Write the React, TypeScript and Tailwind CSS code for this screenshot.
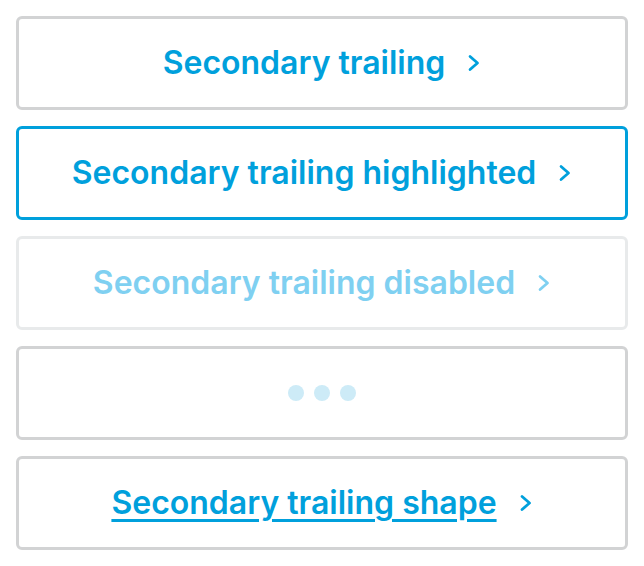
import React from "react";

function Chevron({ className }: { className?: string }) {
  return (
    <svg viewBox="0 0 16 20" className={className} fill="none" stroke="currentColor" strokeWidth={3.2} strokeLinecap="round" strokeLinejoin="round">
      <path d="M3.5 2.5 L12 10 L3.5 17.5" />
    </svg>
  );
}

const base =
  "flex h-[94px] w-full items-center justify-center gap-[22px] rounded-md border-[3px] bg-white text-[32px] font-semibold";

export default function App() {
  return (
    <div className="flex min-h-screen flex-col gap-4 bg-white px-4 py-4 font-['Inter','Liberation_Sans',sans-serif]">
      <button className={`${base} border-[#d2d3d4] text-[#00a0dc]`}>
        <span>Secondary trailing</span>
        <Chevron className="h-[20px] w-[14px]" />
      </button>
      <button className={`${base} border-[#00a0dc] text-[#00a0dc]`}>
        <span>Secondary trailing highlighted</span>
        <Chevron className="h-[20px] w-[14px]" />
      </button>
      <button className={`${base} border-[#e8eaeb] text-[#7fd0f1]`} disabled>
        <span>Secondary trailing disabled</span>
        <Chevron className="h-[20px] w-[14px]" />
      </button>
      <button className={`${base} border-[#d2d3d4]`}>
        <span className="flex items-center gap-[10px]">
          <span className="h-4 w-4 rounded-full bg-[#cdebf7]" />
          <span className="h-4 w-4 rounded-full bg-[#cdebf7]" />
          <span className="h-4 w-4 rounded-full bg-[#cdebf7]" />
        </span>
      </button>
      <button className={`${base} border-[#d2d3d4] text-[#00a0dc]`}>
        <span className="underline decoration-[3px] underline-offset-[5px]">Secondary trailing shape</span>
        <Chevron className="h-[20px] w-[14px]" />
      </button>
    </div>
  );
}
